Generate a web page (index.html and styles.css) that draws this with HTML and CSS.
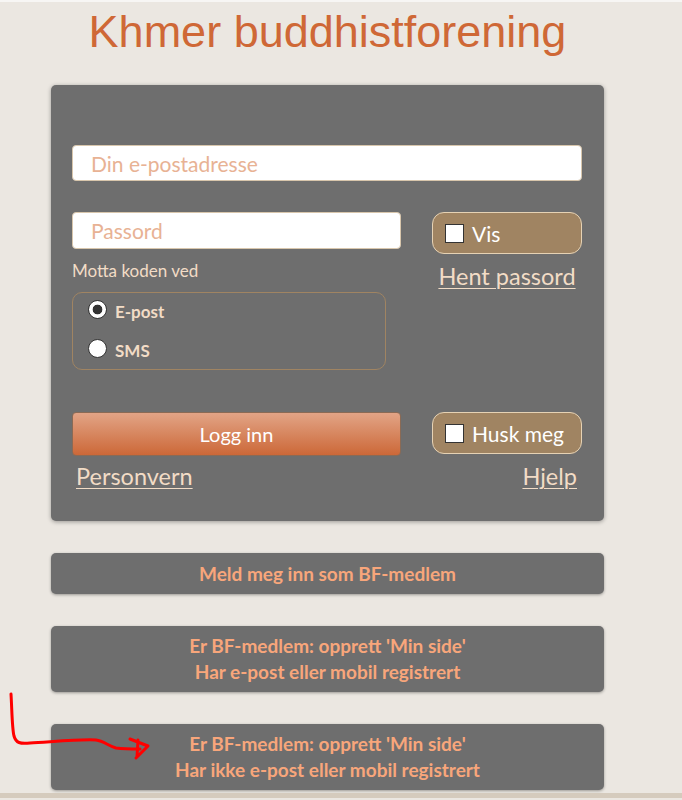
FILE: index.html
```html
<!DOCTYPE html>
<html lang="no">
<head>
<meta charset="utf-8">
<title>Khmer buddhistforening</title>
<link rel="stylesheet" href="styles.css">
</head>
<body>
<div class="page">
  <h1 class="title">Khmer buddhistforening</h1>
  <form class="panel">
    <input class="field field-email" type="email" placeholder="Din e-postadresse">
    <div class="row row-pass">
      <div class="col-left">
        <input class="field field-pass" type="password" placeholder="Passord">
        <div class="hint">Motta koden ved</div>
        <div class="choice">
          <label class="option"><input type="radio" name="via" checked><span>E-post</span></label>
          <label class="option"><input type="radio" name="via"><span>SMS</span></label>
        </div>
      </div>
      <div class="col-right">
        <label class="toggle"><input type="checkbox"><span>Vis</span></label>
        <a class="link link-center" href="#">Hent passord</a>
      </div>
    </div>
    <div class="row row-actions">
      <div class="col-left"><button type="button" class="login">Logg inn</button></div>
      <div class="col-right"><label class="toggle"><input type="checkbox"><span>Husk meg</span></label></div>
    </div>
    <div class="row-links">
      <a class="link link-left" href="#">Personvern</a>
      <a class="link link-right" href="#">Hjelp</a>
    </div>
  </form>
  <a class="action action-single" href="#">Meld meg inn som BF-medlem</a>
  <a class="action" href="#">Er BF-medlem: opprett 'Min side'<br>Har e-post eller mobil registrert</a>
  <a class="action" href="#">Er BF-medlem: opprett 'Min side'<br>Har ikke e-post eller mobil registrert</a>
</div>
<div class="band"></div>
<svg class="scribble" width="160" height="90" viewBox="0 680 160 90">
  <path d="M11 694 C12 710 12 728 14 736 C16 743 20 744 30 743 C50 742 80 739 96 740 C104 741 108 746 116 748 C124 749 132 749 140 749" fill="none" stroke="#ff0000" stroke-width="3" stroke-linecap="round" stroke-linejoin="round"/>
  <path d="M130 739 L148 746 L136 758 M138 740 L137 757" fill="none" stroke="#ff0000" stroke-width="3" stroke-linecap="round" stroke-linejoin="round"/>
</svg>
</body>
</html>
```
FILE: styles.css
```css
html, body {
  margin: 0;
  padding: 0;
}
body {
  background: #ebe7e1;
  border-top: 2px solid #f7f6f4;
  font-family: Lato, "Open Sans", sans-serif;
  position: relative;
  min-height: 798px;
  box-sizing: border-box;
}
.page {
  width: 553px;
  margin-left: 51px;
  display: flex;
  flex-direction: column;
}
.title {
  margin: 4px 0 27px;
  font-family: "Liberation Sans", Arial, sans-serif;
  font-weight: normal;
  font-size: 45px;
  line-height: 52px;
  color: #cf6836;
  text-align: center;
}
.panel {
  background: #6e6e6e;
  border-radius: 5px;
  box-shadow: 0 1px 4px rgba(0, 0, 0, 0.35);
  padding: 60px 22px 32px 21px;
  display: flex;
  flex-direction: column;
}
.field {
  box-sizing: border-box;
  border: 1px solid #d8c6ac;
  border-radius: 4px;
  background: #fff;
  font-family: Lato, sans-serif;
  font-size: 21px;
  padding: 0 0 0 18px;
  outline: none;
  margin: 0;
}
.field::placeholder {
  color: #e8b294;
}
.field-email {
  width: 100%;
  height: 36px;
}
.field-pass {
  width: 100%;
  height: 37px;
}
.row {
  display: flex;
  gap: 31px;
  align-items: flex-start;
}
.row-pass {
  margin-top: 31px;
}
.col-left {
  width: 329px;
  display: flex;
  flex-direction: column;
}
.col-right {
  flex: 1;
  display: flex;
  flex-direction: column;
}
.hint {
  margin-top: 12px;
  font-size: 17px;
  line-height: 20px;
  color: #f2dcc6;
}
.choice {
  margin-top: 11px;
  width: 314px;
  box-sizing: border-box;
  border: 1px solid #a08462;
  border-radius: 10px;
  padding: 7px 0 12px 15px;
}
.option {
  display: flex;
  align-items: flex-start;
  height: 39px;
}
.option:last-child {
  height: 18px;
}
.option input {
  appearance: none;
  -webkit-appearance: none;
  margin: 0 8px 0 0;
  width: 19px;
  height: 19px;
  border-radius: 50%;
  border: 1px solid #333;
  background: #fff;
  box-sizing: border-box;
}
.option input:checked {
  background: radial-gradient(circle, #333 0 4.5px, #fff 5.2px);
}
.option span {
  font-weight: bold;
  font-size: 17px;
  line-height: 18px;
  padding-top: 3px;
  color: #f2dcc6;
}
.toggle {
  box-sizing: border-box;
  height: 42px;
  border: 1px solid #e6d2b4;
  border-radius: 12px;
  background: #a08462;
  display: flex;
  align-items: center;
  padding-left: 12px;
  color: #fff;
  font-size: 21px;
}
.toggle input {
  appearance: none;
  -webkit-appearance: none;
  margin: 0 8px 0 0;
  width: 19px;
  height: 19px;
  border: 1px solid #333;
  background: #fff;
  box-sizing: border-box;
}
.link {
  color: #f2dcc6;
  font-size: 23.5px;
  line-height: 26px;
  text-decoration: underline;
  text-underline-offset: 3px;
  text-decoration-thickness: 1px;
}
.link-center {
  margin-top: 9px;
  text-align: center;
}
.row-actions {
  margin-top: 42px;
}
.login {
  box-sizing: border-box;
  height: 44px;
  width: 100%;
  border: 1px solid #8a6a55;
  border-radius: 4px;
  background: linear-gradient(#e2a486, #cc6838);
  color: #fff;
  font-family: Lato, sans-serif;
  font-size: 20px;
  padding: 0;
}
.row-links {
  margin-top: 7px;
  display: flex;
  justify-content: space-between;
}
.link-left {
  padding-left: 4px;
}
.link-right {
  padding-right: 5px;
}
.action {
  margin-top: 32px;
  background: #6e6e6e;
  border-radius: 5px;
  box-shadow: 0 1px 3px rgba(0, 0, 0, 0.35);
  padding: 7px 0;
  text-align: center;
  color: #f8a67b;
  font-weight: bold;
  font-size: 19px;
  line-height: 26px;
  text-decoration: none;
}
.action-single {
  padding: 8px 0 7px;
}
.band {
  position: absolute;
  left: 0;
  right: 0;
  bottom: 0;
  height: 5px;
  background: #d5cbbd;
}
.scribble {
  position: absolute;
  left: 0;
  top: 678px;
}
```
